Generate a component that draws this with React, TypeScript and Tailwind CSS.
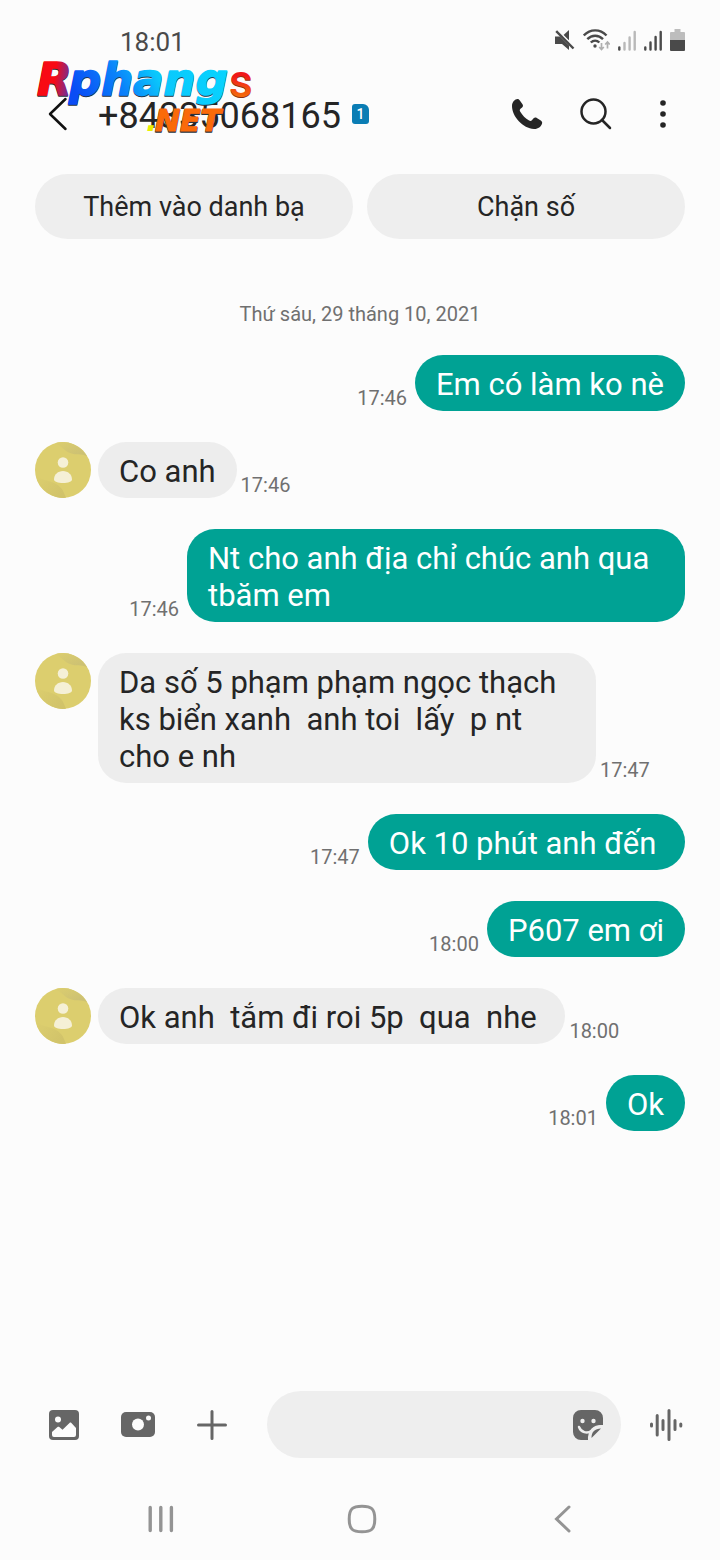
import React, { useState } from "react";

interface Message {
  text: string;
  time: string;
  sent?: boolean;
}

const messages: Message[] = [
  { text: "Em có làm ko nè", time: "17:46", sent: true },
  { text: "Co anh", time: "17:46" },
  { text: "Nt cho anh địa chỉ chúc anh qua tbăm em", time: "17:46", sent: true },
  { text: "Da số 5 phạm phạm ngọc thạch ks biển xanh  anh toi  lấy  p nt cho e nh", time: "17:47" },
  { text: "Ok 10 phút anh đến\u00a0", time: "17:47", sent: true },
  { text: "P607 em ơi", time: "18:00", sent: true },
  { text: "Ok anh  tắm đi roi 5p  qua  nhe\u00a0", time: "18:00" },
  { text: "Ok", time: "18:01", sent: true },
];

const StatusBar: React.FC = () => (
  <div className="flex h-[84px] items-center justify-between pl-[120px] pr-[35px] text-[#4a4a4a]">
    <span className="text-[26px] leading-8">18:01</span>
    <div className="mb-1 flex items-center gap-2">
      <svg width="20" height="22" viewBox="0 0 20 22" fill="currentColor">
        <path d="M8.500 6L14 1v10.500z" />
        <path d="M0 7.500h5L14 16.500V21l-7-6H0z" />
        <path d="M2.600 1.200l17 17" stroke="#fcfcfc" strokeWidth="1.600" />
        <path d="M1.200 2.200l17.300 17.300" stroke="currentColor" strokeWidth="2.400" />
      </svg>
      <svg width="27" height="22" viewBox="0 0 27 22" fill="none" stroke="currentColor" strokeWidth="2.400">
        <path d="M.8 6.500c6.500-6.800 16.200-6.800 22.700 0M4.300 10.200c4.500-4.600 11.200-4.600 15.700 0M7.800 13.500c2.600-2.500 6-2.500 8.600 0" />
        <circle cx="12" cy="17" r="1.700" fill="currentColor" stroke="none" />
        <path d="M18.500 14v6.500m-2.300-2.500l2.300 2.500 2.300-2.500M24.500 19.500V13m-2.300 2.500l2.300-2.500 2.300 2.500" stroke="#b0b0b0" strokeWidth="1.700" />
      </svg>
      <svg width="18" height="22" viewBox="0 0 18 22" strokeWidth="2.400" strokeLinecap="round">
        <path d="M6.500 14v6.500M11.600 8.500v12M16.700 3v17.500" stroke="#b9b9b9" />
        <path d="M1.300 18.500v2" stroke="currentColor" />
      </svg>
      <svg width="18" height="22" viewBox="0 0 18 22" stroke="currentColor" strokeWidth="2.400" strokeLinecap="round">
        <path d="M1.300 18.500v2M6.500 13.500v7M11.600 8v12.500M16.700 3v17.500" />
      </svg>
      <svg width="15" height="22" viewBox="0 0 15 22">
        <path d="M4.500 0h6v3H14a1 1 0 0 1 1 1v8H0V4a1 1 0 0 1 1-1h3.500z" fill="#bdbdbd" />
        <path d="M0 11h15v10a1 1 0 0 1-1 1H1a1 1 0 0 1-1-1z" fill="currentColor" />
      </svg>
    </div>
  </div>
);

const Watermark: React.FC = () => (
  <svg className="pointer-events-none absolute left-[30px] top-[50px]" width="230" height="100" viewBox="0 0 230 100">
    <defs>
      <linearGradient id="wm-r" x1="0" x2="1" y1="0.4" y2="0.6">
        <stop offset="0.5" stopColor="#f80a14" />
        <stop offset="0.95" stopColor="#6a30a0" />
      </linearGradient>
      <linearGradient id="wm-name" x1="0" x2="1" y1="0.5" y2="0.3">
        <stop offset="0" stopColor="#0a4cf5" />
        <stop offset="0.3" stopColor="#0a82fa" />
        <stop offset="0.55" stopColor="#0ac8fc" />
        <stop offset="1" stopColor="#08d4ff" />
      </linearGradient>
      <linearGradient id="wm-s" x1="0" x2="0" y1="0" y2="1">
        <stop offset="0.4" stopColor="#f01818" />
        <stop offset="0.85" stopColor="#f57a0a" />
      </linearGradient>
    </defs>
    <g fontFamily="DejaVu Sans, sans-serif" fontWeight="700" fontStyle="italic" strokeLinejoin="round">
      <g fill="#27343f" stroke="#27343f" strokeWidth="1.500">
        <text x="7" y="46" fontSize="45">R</text>
        <text x="39" y="46" fontSize="45">phang</text>
        <text x="125" y="82" fontSize="30">NET</text>
      </g>
      <text x="7" y="45" fontSize="45" fill="url(#wm-r)" stroke="url(#wm-r)" strokeWidth="1.500">R</text>
      <text x="39" y="45" fontSize="45" fill="url(#wm-name)" stroke="url(#wm-name)" strokeWidth="1.500">phang</text>
      <text x="116" y="81" fontSize="30" fill="#e8f000">.</text>
      <text x="125" y="81" fontSize="30" fill="#fa6a0a" stroke="#fa6a0a">NET</text>
    </g>
    <g fontFamily="Roboto, sans-serif" fontWeight="500" fontSize="46">
      <text x="199" y="48" fill="#8a3010">s</text>
      <text x="199" y="47" fill="url(#wm-s)">s</text>
    </g>
  </svg>
);

const ChatHeader: React.FC = () => (
  <header className="flex h-[60px] items-center pl-12 pr-[52px] text-[#252525]">
    <button aria-label="Quay lại" className="mr-[30px]">
      <svg width="20" height="34" viewBox="0 0 20 34" fill="none" stroke="#111" strokeWidth="2.500" strokeLinecap="round" strokeLinejoin="round">
        <path d="M17.500 2L2 17l15.500 15" />
      </svg>
    </button>
    <h1 className="pt-[3px] text-[36px] leading-10">+84335068165</h1>
    <span className="ml-[11px] flex h-5 w-[17px] items-center justify-center rounded-[3px] rounded-tr-md bg-[#0a7db4] text-sm leading-4 font-medium text-white">1</span>
    <div className="ml-auto flex items-center">
      <button aria-label="Gọi" className="mr-[37px]">
        <svg width="32" height="32" viewBox="0 0 32 32" fill="currentColor">
          <path d="M1 8C1 4 4 1 6.500 1c1 0 1.800.6 2.500 1.700l2.500 3.500c.8 1.200.6 2.300-.4 3.200L9.500 10.800c-1 .9-.9 1.900-.2 3 2.100 3.600 5 6.500 8.800 8.700 1.100.6 2 .6 2.800-.3l1.700-1.900c.9-1 2-1.200 3.200-.4l4 2.600c1.200.8 1.700 1.900 1.200 3.200-1 2.900-4 5.500-8 5.300C12 30.500 1 18.500 1 8z" />
        </svg>
      </button>
      <button aria-label="Tìm kiếm" className="mr-[46px]">
        <svg width="32" height="32" viewBox="0 0 32 32" fill="none" stroke="currentColor" strokeWidth="2.500" strokeLinecap="round">
          <circle cx="13.500" cy="13.500" r="12" />
          <path d="M22 22l8 8" />
        </svg>
      </button>
      <button aria-label="Tùy chọn khác">
        <svg width="10" height="28" viewBox="0 0 10 28" fill="currentColor">
          <circle cx="5" cy="3" r="2.800" />
          <circle cx="5" cy="14" r="2.800" />
          <circle cx="5" cy="25" r="2.800" />
        </svg>
      </button>
    </div>
  </header>
);

const Avatar: React.FC = () => (
  <svg className="mr-[7px] shrink-0 self-start" width="56" height="56" viewBox="0 0 56 56">
    <defs>
      <linearGradient id="avatar-top" x1="0" x2="1" y1="0" y2="1">
        <stop offset="0" stopColor="#dcce6e" />
        <stop offset="0.8" stopColor="#cdc173" />
      </linearGradient>
      <linearGradient id="avatar-bottom" x1="0" x2="1" y1="0" y2="0.6">
        <stop offset="0" stopColor="#dcce6e" />
        <stop offset="1" stopColor="#d1c36a" />
      </linearGradient>
    </defs>
    <circle cx="28" cy="28" r="28" fill="#dcce6e" />
    <path d="M20 1.200A28 28 0 0 1 52 14.200C45 11 42 14 35 11S27 4 20 1.200z" fill="url(#avatar-top)" />
    <path d="M1 34C8 39 14 38 21 42s8 9 10 13.800A28 28 0 0 1 1 34z" fill="url(#avatar-bottom)" />
    <circle cx="28" cy="20.500" r="5.300" fill="#f5f0d6" />
    <path d="M19 37.500c0-5 4-8.500 9-8.500s9 3.500 9 8.500c0 2-4 3.500-9 3.500s-9-1.500-9-3.500z" fill="#f5f0d6" />
  </svg>
);

const MessageRow: React.FC<{ message: Message }> = ({ message }) => {
  const { text, time, sent } = message;
  const timeLabel = <time className="mb-px text-[20px] leading-6 text-[#707070]">{time}</time>;

  if (sent) {
    return (
      <li className="flex items-end justify-end gap-2">
        {timeLabel}
        <p className="max-w-[498px] whitespace-pre-wrap rounded-[28px] bg-[#00a294] px-[21px] pt-[11px] pb-2 text-[31px] leading-[37px] text-white">{text}</p>
      </li>
    );
  }

  return (
    <li className="flex items-end">
      <Avatar />
      <p className="mr-1 max-w-[498px] whitespace-pre-wrap rounded-[28px] bg-[#ededed] px-[21px] pt-[11px] pb-2 text-[31px] leading-[37px] text-[#252525]">{text}</p>
      {timeLabel}
    </li>
  );
};

const Composer: React.FC = () => {
  const [draft, setDraft] = useState("");

  return (
    <form className="mb-5 flex items-center pl-12 pr-9 text-[#666]" onSubmit={(e) => e.preventDefault()}>
      <button type="button" aria-label="Thư viện ảnh" className="mr-10">
        <svg width="32" height="32" viewBox="0 0 32 32">
          <rect x="1" y="1" width="30" height="30" rx="4" fill="currentColor" />
          <circle cx="10" cy="10.500" r="3" fill="#fcfcfc" />
          <path d="M4 23l5.500-5c.6-.5 1.200-.5 1.800 0l3.200 2.800 7-6.800c.6-.6 1.300-.6 1.900 0l4.600 5v7a2 2 0 0 1-2 2H6a2 2 0 0 1-2-2z" fill="#fcfcfc" />
        </svg>
      </button>
      <button type="button" aria-label="Máy ảnh" className="mr-10">
        <svg width="36" height="28" viewBox="0 0 36 28">
          <rect x="1" y="1" width="34" height="25" rx="5" fill="currentColor" />
          <circle cx="18" cy="13.500" r="6" fill="#fcfcfc" />
          <circle cx="28.500" cy="7" r="2.500" fill="#fcfcfc" />
        </svg>
      </button>
      <button type="button" aria-label="Thêm" className="mr-[39px]">
        <svg width="32" height="32" viewBox="0 0 32 32" stroke="currentColor" strokeWidth="3" strokeLinecap="round">
          <path d="M16 2.500v27M2.500 16h27" />
        </svg>
      </button>
      <div className="flex h-[67px] min-w-0 flex-1 items-center rounded-full bg-[#eeeeee] pl-6 pr-[17px]">
        <input
          aria-label="Nhập tin nhắn"
          className="min-w-0 flex-1 bg-transparent text-[27px] outline-none"
          value={draft}
          onChange={(e) => setDraft(e.target.value)}
        />
        <button type="button" aria-label="Nhãn dán">
          <svg width="32" height="32" viewBox="0 0 32 32" fill="none">
            <path d="M9 1h14a8 8 0 0 1 8 8v7c-9 0-14 5-14 15H9a8 8 0 0 1-8-8V9a8 8 0 0 1 8-8z" fill="currentColor" />
            <circle cx="10.500" cy="12" r="2.200" fill="#eee" />
            <circle cx="21.500" cy="12" r="2.200" fill="#eee" />
            <path d="M7 18c2 5.500 8 7 12.500 4" stroke="#eee" strokeWidth="2.400" strokeLinecap="round" />
            <path d="M31 17.500c-9-.5-14 4-13.500 13.500" stroke="#eee" strokeWidth="3" />
            <path d="M19.500 29c-.2-6 3.500-9.500 9.500-9.500z" fill="currentColor" />
          </svg>
        </button>
      </div>
      <button type="button" aria-label="Ghi âm" className="ml-7">
        <svg width="35" height="34" viewBox="0 0 35 34" stroke="currentColor" strokeWidth="3" strokeLinecap="round">
          <path d="M2.500 16v2M8.200 7.500v19.500M14 12.500v9M20 2.500v29M26 12.500v9M31.800 16v2" />
        </svg>
      </button>
    </form>
  );
};

const NavBar: React.FC = () => (
  <nav className="grid h-[82px] grid-cols-3 items-center justify-items-center pl-[60px] pr-[57px] text-[#949494]">
    <button aria-label="Gần đây">
      <svg width="26" height="28" viewBox="0 0 26 28" stroke="currentColor" strokeWidth="3.400" strokeLinecap="round">
        <path d="M2.200 2.500v23M12.800 2.500v23M23.400 2.500v23" />
      </svg>
    </button>
    <button aria-label="Trang chủ">
      <svg width="30" height="30" viewBox="0 0 30 30" fill="none" stroke="currentColor" strokeWidth="3">
        <path d="M15 2.200c9.500 0 12.800 2.500 12.800 12.800S24.500 27.800 15 27.800 2.200 25.300 2.200 15 5.500 2.200 15 2.200z" />
      </svg>
    </button>
    <button aria-label="Trở về">
      <svg width="17" height="28" viewBox="0 0 17 28" fill="none" stroke="currentColor" strokeWidth="3" strokeLinecap="round">
        <path d="M15 2L2.500 14 15 26" />
      </svg>
    </button>
  </nav>
);

const App: React.FC = () => {
  return (
    <div className="relative flex min-h-screen flex-col bg-[#fcfcfc] font-['Roboto',sans-serif]">
      <StatusBar />
      <ChatHeader />
      <Watermark />
      <main className="flex-1 px-[35px] pt-[30px]">
        <div className="grid grid-cols-2 gap-[14px] text-[27px] leading-8 text-[#252525]">
          <button className="h-[65px] rounded-full bg-[#eeeeee]">Thêm vào danh bạ</button>
          <button className="h-[65px] rounded-full bg-[#eeeeee]">Chặn số</button>
        </div>
        <p className="mt-[63px] text-center text-[20px] leading-6 text-[#707070]">Thứ sáu, 29 tháng 10, 2021</p>
        <ul className="mt-[29px] flex flex-col gap-[31px]">
          {messages.map((message, index) => (
            <MessageRow key={index} message={message} />
          ))}
        </ul>
      </main>
      <Composer />
      <NavBar />
    </div>
  );
};

export default App;
